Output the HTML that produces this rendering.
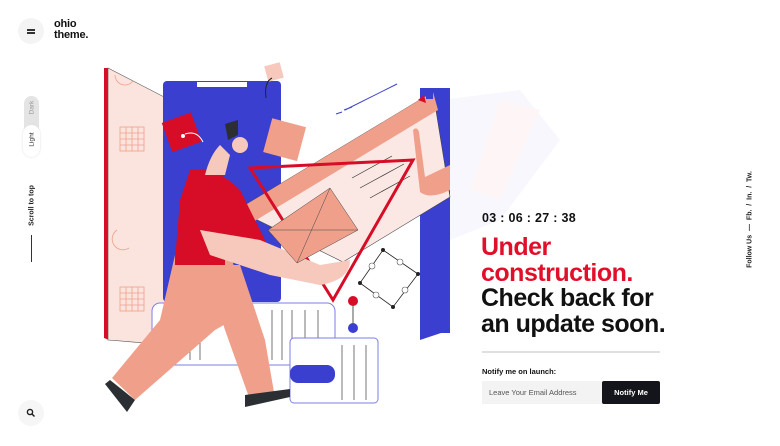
<!DOCTYPE html>
<html><head><meta charset="utf-8"><style>
html,body{margin:0;padding:0;background:#fff;width:780px;height:446px;overflow:hidden;font-family:"Liberation Sans",sans-serif;color:#111}
.abs{position:absolute}
.rot{transform:rotate(-90deg);transform-origin:center;white-space:nowrap}
</style></head><body>
<div class="abs" style="left:18px;top:18px;width:26px;height:26px;border-radius:50%;background:#f4f4f4"></div>
<div class="abs" style="left:27px;top:29px;width:8px;height:1.5px;background:#333"></div>
<div class="abs" style="left:27px;top:32px;width:8px;height:1.5px;background:#333"></div>
<div class="abs" style="left:54px;top:19px;font-size:11px;font-weight:bold;line-height:11px;letter-spacing:-0.2px">ohio<br>theme.</div>
<div class="abs" style="left:24px;top:96px;width:15px;height:61px;border-radius:8px;background:#e4e4e4"></div>
<div class="abs" style="left:23px;top:125px;width:17px;height:32px;border-radius:9px;background:#fff;box-shadow:0 0 2px #ddd"></div>
<div class="abs rot" style="left:16px;top:104px;width:32px;font-size:6.5px;color:#999;text-align:center">Dark</div>
<div class="abs rot" style="left:16px;top:136px;width:32px;font-size:6.5px;color:#333;text-align:center">Light</div>
<div class="abs rot" style="left:2px;top:202px;width:60px;font-size:7px;font-weight:bold;color:#222;text-align:center">Scroll to top</div>
<div class="abs" style="left:31px;top:235px;width:1px;height:27px;background:#333"></div>
<div class="abs" style="left:18px;top:400px;width:26px;height:26px;border-radius:50%;background:#f6f6f6"></div>
<svg class="abs" style="left:26px;top:408px" width="10" height="10"><circle cx="4" cy="4" r="2.6" fill="none" stroke="#222" stroke-width="1.4"/><line x1="6" y1="6" x2="8.5" y2="8.5" stroke="#222" stroke-width="1.5"/></svg>
<div class="abs rot" style="left:700px;top:216px;width:100px;font-size:7px;font-weight:bold;color:#222;text-align:center">Follow Us &nbsp;— &nbsp;Fb. &nbsp;/ &nbsp;In. &nbsp;/ &nbsp;Tw.</div>

<svg class="abs" style="left:0;top:0" width="780" height="446">
<g opacity="0.035"><polygon points="440,100 520,90 560,140 500,220 450,240" fill="#3a3fcf"/><polygon points="500,100 540,110 500,200 470,190" fill="#e0102a"/></g>
<polygon points="104,68 109,68 109,340 104,338" fill="#d70d27"/>
<polygon points="108,68 170,100 170,345 108,340" fill="#fbe3de" stroke="#555" stroke-width="0.6"/>
<g stroke="#f0a08a" stroke-width="0.8" fill="none">
<rect x="120" y="127" width="24" height="24"/><path d="M126 127v24M132 127v24M138 127v24M120 133h24M120 139h24M120 145h24"/>
<rect x="120" y="287" width="24" height="24"/><path d="M126 287v24M132 287v24M138 287v24M120 293h24M120 299h24M120 305h24"/>
<path d="M115 75a10 10 0 0 0 18 6"/><path d="M117 230a10 10 0 0 0 12 18"/></g>
<rect x="163" y="81" width="118" height="221" rx="4" fill="#3a3fcf"/>
<rect x="197" y="82" width="50" height="5" fill="#fff"/>
<rect x="420" y="88" width="30" height="245" fill="#3a3fcf"/>
<polygon points="420,300 450,250 450,330 420,340" fill="#3a3fcf"/>
<rect x="166" y="117" width="31" height="31" fill="#d70d27" transform="rotate(-20 181 132)"/>
<circle cx="183" cy="136" r="2" fill="#fff"/>
<path d="M185 134q12-4 18 8" stroke="#fff" fill="none"/>
<rect x="267" y="122" width="35" height="35" fill="#f0a08a" transform="rotate(15 284 140)"/>
<rect x="266" y="64" width="16" height="16" fill="#f7c9bc" transform="rotate(-15 274 72)"/>
<path d="M272 78q-8 4-6 20" stroke="#222" fill="none"/>
<g stroke="#3a3fcf" stroke-width="1"><path d="M345 110l52-26M342 112l-6 2M352 107l-8 3"/></g>
<polygon points="237,210 433,92 450,197 343,262" fill="#fbe8e4" stroke="#444" stroke-width="0.6"/>
<polygon points="237,210 433,92 438,110 243,228" fill="#f0a08a"/>
<polygon points="418,100 424,95 426,103" fill="#d70d27"/><rect x="426" y="92" width="7" height="7" fill="#3a3fcf"/>
<g stroke="#333" stroke-width="0.7"><path d="M352 178l40-22M360 188l44-24M370 198l40-22"/></g>
<path d="M413 130q4-4 6 2l6 45 25-12v25q-20 10-30 2z" fill="#f0a08a"/>
<polygon points="250,168 413,160 333,300" fill="none" stroke="#d70d27" stroke-width="3"/>
<rect x="152" y="303" width="183" height="62" rx="8" fill="#fff" stroke="#7b7fe6"/>
<g stroke="#555" stroke-width="0.8"><path d="M190 310v50M200 310v50M272 310v50M282 310v50M292 310v50M305 310v50M318 310v50"/></g>
<rect x="290" y="338" width="88" height="65" rx="4" fill="#fff" stroke="#7b7fe6"/>
<rect x="290" y="365" width="45" height="18" rx="8" fill="#3a3fcf"/>
<g stroke="#555" stroke-width="0.8"><path d="M342 345v55M354 345v55M366 345v55"/></g>
<circle cx="353" cy="301" r="5" fill="#d70d27"/><line x1="353" y1="306" x2="353" y2="323" stroke="#555"/><circle cx="353" cy="328" r="5" fill="#3a3fcf"/>
<polygon points="383,250 418,274 393,307 360,283" fill="none" stroke="#222" stroke-width="0.8"/>
<g fill="#222"><circle cx="383" cy="250" r="2"/><circle cx="418" cy="274" r="2"/><circle cx="393" cy="307" r="2"/><circle cx="360" cy="283" r="2"/></g>
<g fill="#fff" stroke="#555" stroke-width="0.6"><circle cx="400" cy="262" r="3"/><circle cx="405" cy="290" r="3"/><circle cx="376" cy="295" r="3"/><circle cx="372" cy="266" r="3"/></g>
<polygon points="175,255 230,255 250,310 215,330 135,400 112,378 160,320" fill="#f0a08a"/>
<polygon points="205,265 240,265 265,340 275,398 250,400 225,330" fill="#f0a08a"/>
<path d="M110 380l25 20 -8 12 -22-28z" fill="#2b2f33"/>
<path d="M245 395l45-6 0 8 -45 10z" fill="#2b2f33"/>
<path d="M190 170q25-5 50 20l30 60 -95 10 5-60z" fill="#d70d27"/>
<path d="M175 260h50" stroke="#d70d27" stroke-width="10"/>
<path d="M205 175q5-20 15-30l10 10-5 20z" fill="#f7c9bc"/>
<circle cx="240" cy="145" r="8" fill="#f7c9bc"/>
<polygon points="225,124 238,120 238,135 228,140" fill="#2b2f33"/>
<path d="M200 230l60 10 60 25 30 -5q0 20-30 25l-50-10-60-20z" fill="#f7c9bc"/>
<polygon points="268,230 330,188 358,230 297,263" fill="#f0a08a" stroke="#444" stroke-width="0.5"/>
<path d="M268 230h90M330 188l-33 75" stroke="#444" stroke-width="0.5"/>
</svg>

<div class="abs" style="left:482px;top:211px;font-size:12.5px;font-weight:bold;letter-spacing:0.3px">03 : 06 : 27 : 38</div>
<div class="abs" style="left:481px;top:235px;font-size:25px;font-weight:bold;line-height:25.5px;letter-spacing:-0.5px"><span style="color:#e0102a">Under<br>construction.</span><br>Check back for<br>an update soon.</div>
<div class="abs" style="left:482px;top:351px;width:178px;height:2px;background:#e0e0e0"></div>
<div class="abs" style="left:482px;top:367px;font-size:7.5px;font-weight:bold">Notify me on launch:</div>
<div class="abs" style="left:482px;top:381px;width:120px;height:23px;background:#f3f3f3;font-size:7.5px;color:#555;line-height:23px;text-indent:7px">Leave Your Email Address</div>
<div class="abs" style="left:602px;top:381px;width:58px;height:23px;background:#14151a;border-radius:2px;font-size:7.5px;font-weight:bold;color:#fff;line-height:23px;text-align:center">Notify Me</div>
</body></html>
